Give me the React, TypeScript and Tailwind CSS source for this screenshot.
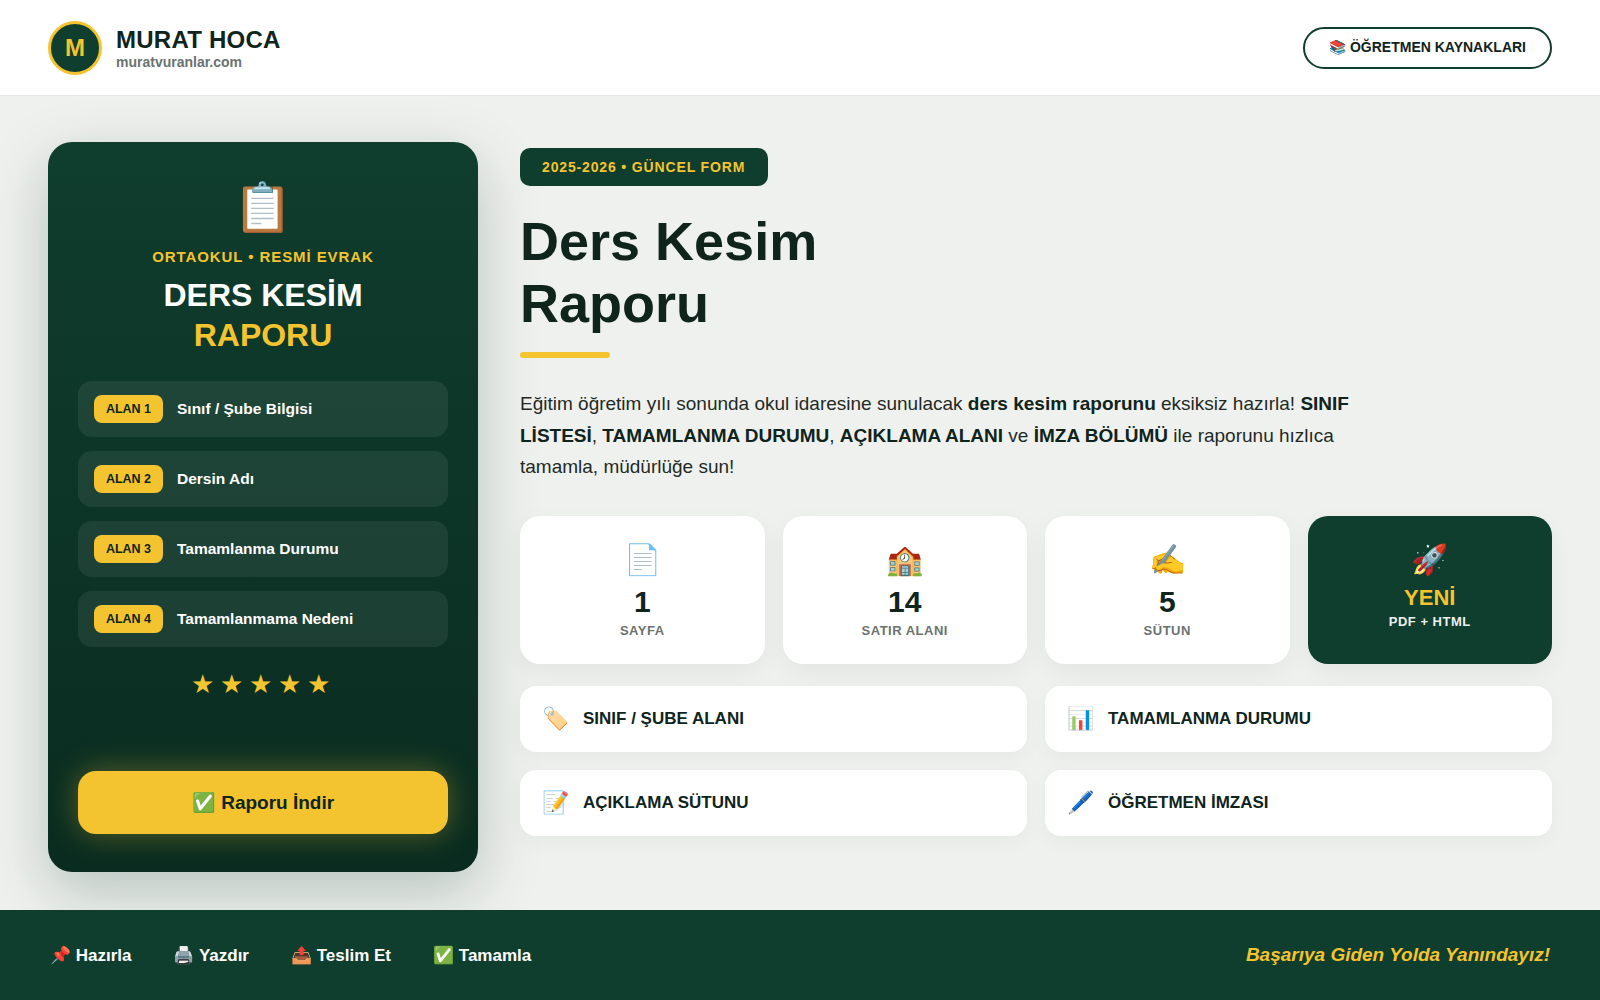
const sans = "font-['Liberation_Sans',Arial,sans-serif]";

const fields = [
  ["ALAN 1", "Sınıf / Şube Bilgisi"],
  ["ALAN 2", "Dersin Adı"],
  ["ALAN 3", "Tamamlanma Durumu"],
  ["ALAN 4", "Tamamlanmama Nedeni"],
];

const stats = [
  ["📄", "1", "SAYFA"],
  ["🏫", "14", "SATIR ALANI"],
  ["✍️", "5", "SÜTUN"],
];

const features = [
  ["🏷️", "SINIF / ŞUBE ALANI"],
  ["📊", "TAMAMLANMA DURUMU"],
  ["📝", "AÇIKLAMA SÜTUNU"],
  ["🖊️", "ÖĞRETMEN İMZASI"],
];

const steps = ["📌 Hazırla", "🖨️ Yazdır", "📤 Teslim Et", "✅ Tamamla"];

export default function App() {
  return (
    <div className={`${sans} w-full h-[1000px] overflow-hidden flex flex-col bg-[#eff1ee] text-[#0f241c]`}>
      <header className="h-[96px] shrink-0 bg-white border-b border-[#e4e6e4] px-12 flex items-center justify-between">
        <div className="flex items-center gap-[14px]">
          <div className="w-[54px] h-[54px] rounded-full bg-[#0f3d2e] border-[3px] border-[#f4c430] flex items-center justify-center text-[24px] font-bold text-[#f4c430]">M</div>
          <div>
            <div className="text-[24px] leading-[28px] font-bold tracking-[0.25px]">MURAT HOCA</div>
            <div className="text-[14px] leading-[16px] font-bold text-[#6b7270]">muratvuranlar.com</div>
          </div>
        </div>
        <button className="h-[42px] px-[24px] rounded-full border-2 border-[#0f3d2e] bg-white text-[14px] font-bold">📚 ÖĞRETMEN KAYNAKLARI</button>
      </header>

      <main className="flex-1 flex gap-[42px] px-12 pt-[46px]">
        <section className="w-[430px] h-[730px] shrink-0 rounded-[24px] bg-gradient-to-b from-[#0f3d2e] to-[#0a2c20] shadow-[0_20px_60px_rgba(15,61,46,0.25)] px-[30px] pt-[34px] pb-[38px] flex flex-col">
          <div className="text-center text-[48px] leading-[64px]">📋</div>
          <div className="mt-[8px] text-center text-[15px] leading-[18px] font-bold tracking-[0.92px] text-[#f4c430]">ORTAOKUL • RESMİ EVRAK</div>
          <h2 className="mt-[9px] text-center text-[32px] leading-[40px] font-bold text-white">
            DERS KESİM<br /><span className="text-[#f4c430]">RAPORU</span>
          </h2>
          <div className="mt-[26px] flex flex-col gap-[14px]">
            {fields.map(([tag, label]) => (
              <div key={tag} className="h-[56px] rounded-[14px] bg-white/7 px-4 flex items-center gap-[14px]">
                <span className="w-[69px] h-[28px] rounded-[8px] bg-[#f4c430] flex items-center justify-center text-[12.5px] font-bold text-[#0f241c]">{tag}</span>
                <span className="text-[15.5px] font-bold text-white">{label}</span>
              </div>
            ))}
          </div>
          <div className="mt-[21px] text-center text-[26px] leading-[32px] tracking-[6px] text-[#f4c430]">★★★★★</div>
          <button className="mt-auto h-[63px] pt-[1px] rounded-[18px] bg-[#f4c430] shadow-[0_0_30px_rgba(244,196,48,0.35)] text-[19px] font-bold text-[#0f241c]">✅ Raporu İndir</button>
        </section>

        <section className="flex-1 min-w-0 pt-[6px]">
          <div className="inline-flex h-[38px] items-center rounded-[10px] bg-[#0f3d2e] pl-[22px] pr-[23px] text-[14px] font-bold tracking-[0.85px] text-[#f4c430]">2025-2026 • GÜNCEL FORM</div>
          <h1 className="mt-[24px] text-[54px] leading-[62px] font-bold text-[#0f241c]">Ders Kesim<br />Raporu</h1>
          <div className="mt-[18px] w-[90px] h-[6px] rounded-full bg-[#f4c430]" />
          <p className="mt-[30px] max-w-[850px] text-[19px] leading-[31.5px] text-[#1f2a26]">
            Eğitim öğretim yılı sonunda okul idaresine sunulacak <b className="text-[#0f241c]">ders kesim raporunu</b> eksiksiz hazırla! <b className="text-[#0f241c]">SINIF LİSTESİ</b>, <b className="text-[#0f241c]">TAMAMLANMA DURUMU</b>, <b className="text-[#0f241c]">AÇIKLAMA ALANI</b> ve <b className="text-[#0f241c]">İMZA BÖLÜMÜ</b> ile raporunu hızlıca tamamla, müdürlüğe sun!
          </p>
          <div className="mt-[33px] grid grid-cols-4 gap-[18px]">
            {stats.map(([icon, value, label]) => (
              <div key={label} className="h-[148px] rounded-[20px] bg-white shadow-[0_8px_24px_rgba(0,0,0,0.05)] pt-[26px] flex flex-col items-center">
                <div className="text-[30px] leading-[36px]">{icon}</div>
                <div className="mt-[7px] text-[30px] leading-[34px] font-bold text-[#0f241c]">{value}</div>
                <div className="mt-[4px] text-[13px] leading-[16px] font-bold tracking-[0.5px] text-[#6b7270]">{label}</div>
              </div>
            ))}
            <div className="h-[148px] rounded-[20px] bg-[#0f3d2e] shadow-[0_8px_24px_rgba(0,0,0,0.05)] pt-[26px] flex flex-col items-center">
              <div className="text-[30px] leading-[36px]">🚀</div>
              <div className="mt-[7px] text-[22px] leading-[25px] font-bold text-[#f4c430]">YENİ</div>
              <div className="mt-[4px] text-[13px] leading-[16px] font-bold tracking-[0.5px] text-[#eef0ee]">PDF + HTML</div>
            </div>
          </div>
          <div className="mt-[22px] grid grid-cols-2 gap-x-[18px] gap-y-[18px]">
            {features.map(([icon, label]) => (
              <div key={label} className="h-[66px] rounded-[16px] bg-white shadow-[0_6px_20px_rgba(0,0,0,0.04)] px-[22px] flex items-center gap-[14px]">
                <span className="text-[22px] leading-[30px]">{icon}</span>
                <span className="text-[17px] font-bold text-[#0f241c]">{label}</span>
              </div>
            ))}
          </div>
        </section>
      </main>

      <footer className="h-[90px] shrink-0 bg-[#0f3d2e] px-[50px] flex items-center justify-between">
        <div className="pt-[1px] flex items-center gap-[42px] text-[17px] font-bold text-white">
          {steps.map((s) => <span key={s}>{s}</span>)}
        </div>
        <div className="text-[19px] font-bold italic text-[#f4c430]">Başarıya Giden Yolda Yanındayız!</div>
      </footer>
    </div>
  );
}
